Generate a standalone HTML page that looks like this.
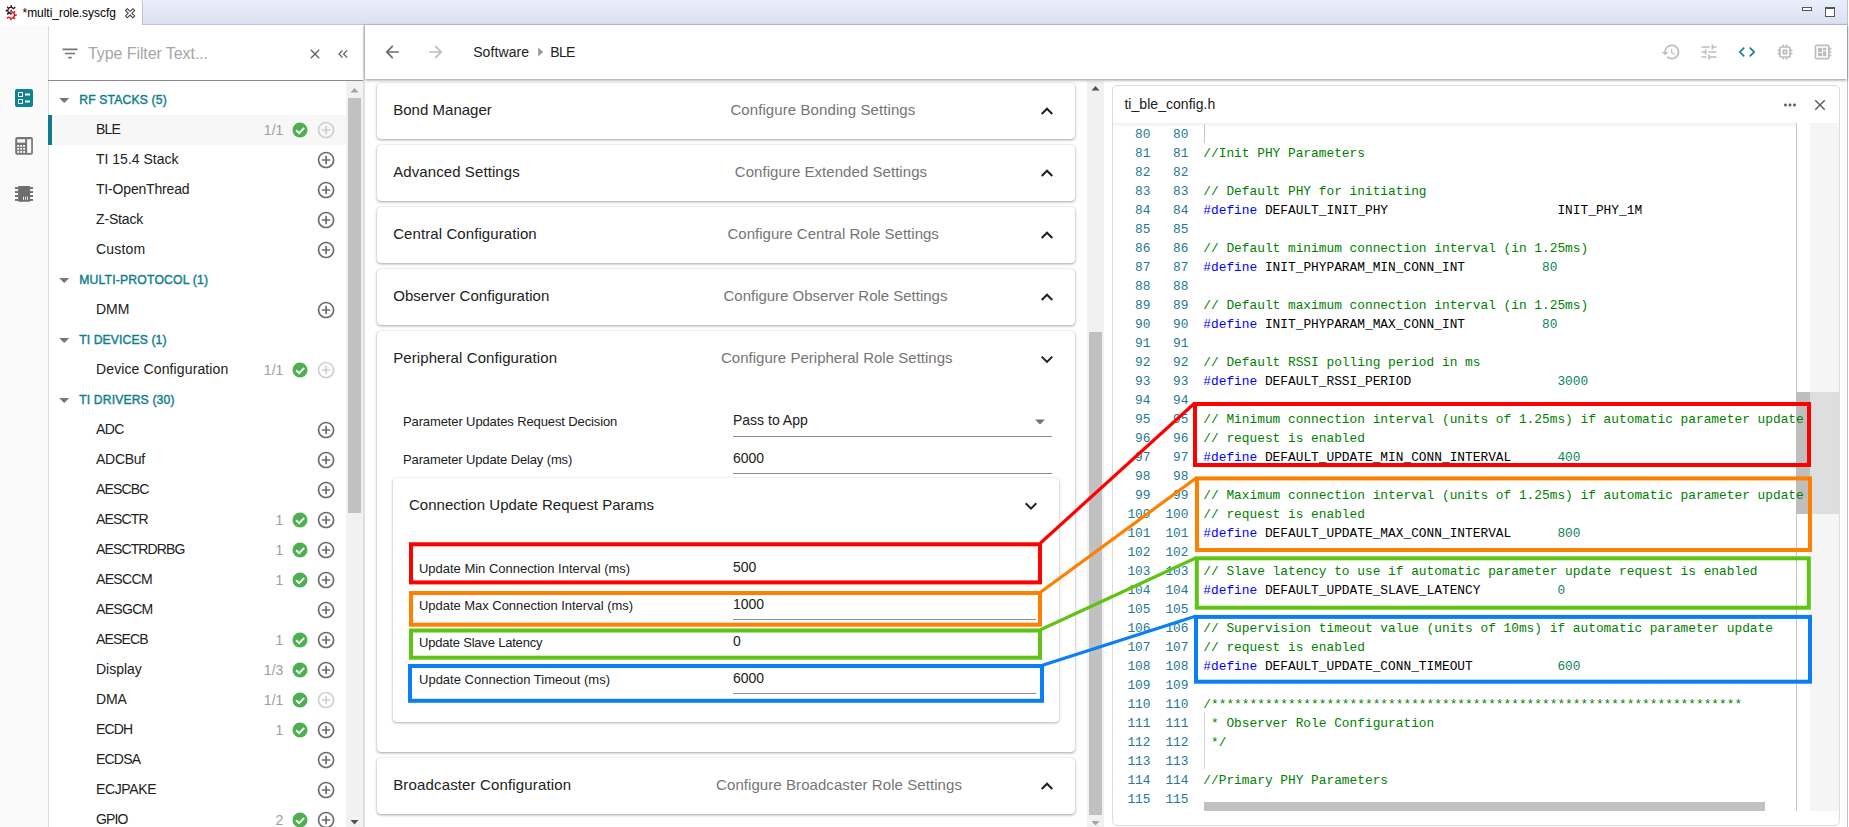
<!DOCTYPE html>
<html lang="en">
<head>
<meta charset="utf-8">
<title>multi_role.syscfg</title>
<style>
html,body{margin:0;padding:0;}
body{width:1849px;height:827px;overflow:hidden;background:#fff;position:relative;font-family:"Liberation Sans", Arial, sans-serif;}
.abs{position:absolute;}
.tx{position:absolute;white-space:pre;font-family:"Liberation Sans", Arial, sans-serif;}
/* tab bar */
#tabbar{left:0;top:0;width:1848px;height:24px;background:linear-gradient(#e9eefb,#dbe1f1);border-bottom:1px solid #bcc3dc;}
#tab{left:0;top:0;width:143px;height:25px;background:#fff;border-right:1px solid #bcc3dc;border-top-right-radius:3px;box-sizing:border-box;}
#winedge{left:1847px;top:0;width:1px;height:827px;background:#b7bfdb;}
/* left icon bar */
#iconbar{left:0;top:26px;width:49px;height:801px;background:#fafafa;border-right:1px solid #dcdcdc;box-sizing:border-box;}
/* left panel */
#filterline{left:48px;top:80px;width:315px;height:1px;background:#8a8a8a;}
#selrow{left:49px;top:115px;width:297px;height:30px;background:#f7f7f7;}
#selbar{left:48px;top:115px;width:4px;height:30px;background:#0e7d8c;}
#lscroll{left:346px;top:81px;width:17px;height:746px;background:#f1f1f1;}
#lthumb{left:348px;top:98px;width:13px;height:415px;background:#c1c1c1;}
#ldivider{left:363px;top:25px;width:2px;height:802px;background:#e0e0e0;}
/* toolbar */
#toolbar{left:365px;top:25px;width:1482px;height:54px;background:#fff;box-shadow:0 1px 3px rgba(0,0,0,.45);}
/* middle */
.card{position:absolute;left:377px;width:698px;background:#fff;border-radius:4px;box-shadow:0 1px 3px rgba(0,0,0,.35),0 0 1px rgba(0,0,0,.2);}
#inner{left:393px;top:478px;width:666px;height:244px;background:#fff;border-radius:4px;box-shadow:0 1px 3px rgba(0,0,0,.3),0 0 1px rgba(0,0,0,.2);}
.ul{position:absolute;height:1px;background:#8d8d8d;}
#mscroll{left:1087px;top:81px;width:17px;height:746px;background:#f1f1f1;}
#mthumb{left:1089px;top:332px;width:13px;height:483px;background:#c1c1c1;}
/* right */
#rcard{left:1112px;top:85px;width:728px;height:741px;background:#fff;border:1px solid #dcdcdc;border-radius:5px;box-sizing:border-box;}
#ruler{left:1796px;top:123px;width:1px;height:688px;background:#c8c8c8;}
#rgutter{left:1810px;top:123px;width:29px;height:688px;background:#f5f5f5;}
#rthumb1{left:1796px;top:392px;width:14px;height:122px;background:#bebebe;}
#rthumb2{left:1810px;top:392px;width:29px;height:122px;background:#dedede;}
#hthumb{left:1204px;top:802px;width:561px;height:9px;background:#c1c1c1;}
#cursor{left:1204px;top:124px;width:1px;height:19px;background:#c8c8c8;}
#guide{left:1204px;top:712px;width:1px;height:57px;background:#d3d3d3;}
.ln{position:absolute;left:1113px;width:700px;height:19px;line-height:19px;font-family:"Liberation Mono", "DejaVu Sans Mono", monospace;font-size:12.831px;white-space:pre;color:#000;}
.ln span{position:absolute;top:0;}
.n1{right:662.5px;color:#237893;}
.n2{right:624.5px;color:#237893;}
.src{left:90.300px;}
.src span{position:static;}
.c{color:#008000;}
.k{color:#0000ff;}
.n{color:#098658;}
.t{color:#000;}
svg{position:absolute;left:0;top:0;overflow:visible;}
</style>
</head>
<body>
<!-- eclipse tab bar -->
<div id="tabbar" class="abs"></div>
<div id="tab" class="abs"></div>
<div id="winedge" class="abs"></div>

<!-- left icon bar -->
<div id="iconbar" class="abs"></div>

<!-- left panel -->
<div id="selrow" class="abs"></div>
<div id="selbar" class="abs"></div>
<div id="filterline" class="abs"></div>
<div id="lscroll" class="abs"></div>
<div id="lthumb" class="abs"></div>
<div id="ldivider" class="abs"></div>

<!-- middle cards -->
<div class="card" style="top:83px;height:56px"></div>
<div class="card" style="top:145px;height:56px"></div>
<div class="card" style="top:207px;height:56px"></div>
<div class="card" style="top:269px;height:56px"></div>
<div class="card" style="top:331px;height:421px"></div>
<div class="card" style="top:758px;height:56px"></div>
<div id="inner" class="abs"></div>
<div class="ul" style="left:733px;top:436px;width:319px"></div>
<div class="ul" style="left:733px;top:473px;width:319px"></div>
<div class="ul" style="left:733px;top:582px;width:303px"></div>
<div class="ul" style="left:733px;top:619px;width:303px"></div>
<div class="ul" style="left:733px;top:656px;width:303px"></div>
<div class="ul" style="left:733px;top:693px;width:303px"></div>
<div id="mscroll" class="abs"></div>
<div id="mthumb" class="abs"></div>

<!-- right code card -->
<div id="rcard" class="abs"></div>
<div class="abs" style="left:1113px;top:123px;width:683px;height:4px;background:linear-gradient(#eeeeee,#ffffff)"></div>
<div id="rgutter" class="abs"></div>
<div id="ruler" class="abs"></div>
<div id="rthumb1" class="abs"></div>
<div id="rthumb2" class="abs"></div>
<div id="cursor" class="abs"></div>
<div id="guide" class="abs"></div>
<div class="ln" style="top:125px"><span class="n1">80</span><span class="n2">80</span><span class="src"></span></div>
<div class="ln" style="top:144px"><span class="n1">81</span><span class="n2">81</span><span class="src"><span class="c">//Init PHY Parameters</span></span></div>
<div class="ln" style="top:163px"><span class="n1">82</span><span class="n2">82</span><span class="src"></span></div>
<div class="ln" style="top:182px"><span class="n1">83</span><span class="n2">83</span><span class="src"><span class="c">// Default PHY for initiating</span></span></div>
<div class="ln" style="top:201px"><span class="n1">84</span><span class="n2">84</span><span class="src"><span class="k">#define</span><span class="t"> DEFAULT_INIT_PHY                      INIT_PHY_1M</span></span></div>
<div class="ln" style="top:220px"><span class="n1">85</span><span class="n2">85</span><span class="src"></span></div>
<div class="ln" style="top:239px"><span class="n1">86</span><span class="n2">86</span><span class="src"><span class="c">// Default minimum connection interval (in 1.25ms)</span></span></div>
<div class="ln" style="top:258px"><span class="n1">87</span><span class="n2">87</span><span class="src"><span class="k">#define</span><span class="t"> INIT_PHYPARAM_MIN_CONN_INT          </span><span class="n">80</span></span></div>
<div class="ln" style="top:277px"><span class="n1">88</span><span class="n2">88</span><span class="src"></span></div>
<div class="ln" style="top:296px"><span class="n1">89</span><span class="n2">89</span><span class="src"><span class="c">// Default maximum connection interval (in 1.25ms)</span></span></div>
<div class="ln" style="top:315px"><span class="n1">90</span><span class="n2">90</span><span class="src"><span class="k">#define</span><span class="t"> INIT_PHYPARAM_MAX_CONN_INT          </span><span class="n">80</span></span></div>
<div class="ln" style="top:334px"><span class="n1">91</span><span class="n2">91</span><span class="src"></span></div>
<div class="ln" style="top:353px"><span class="n1">92</span><span class="n2">92</span><span class="src"><span class="c">// Default RSSI polling period in ms</span></span></div>
<div class="ln" style="top:372px"><span class="n1">93</span><span class="n2">93</span><span class="src"><span class="k">#define</span><span class="t"> DEFAULT_RSSI_PERIOD                   </span><span class="n">3000</span></span></div>
<div class="ln" style="top:391px"><span class="n1">94</span><span class="n2">94</span><span class="src"></span></div>
<div class="ln" style="top:410px"><span class="n1">95</span><span class="n2">95</span><span class="src"><span class="c">// Minimum connection interval (units of 1.25ms) if automatic parameter update</span></span></div>
<div class="ln" style="top:429px"><span class="n1">96</span><span class="n2">96</span><span class="src"><span class="c">// request is enabled</span></span></div>
<div class="ln" style="top:448px"><span class="n1">97</span><span class="n2">97</span><span class="src"><span class="k">#define</span><span class="t"> DEFAULT_UPDATE_MIN_CONN_INTERVAL      </span><span class="n">400</span></span></div>
<div class="ln" style="top:467px"><span class="n1">98</span><span class="n2">98</span><span class="src"></span></div>
<div class="ln" style="top:486px"><span class="n1">99</span><span class="n2">99</span><span class="src"><span class="c">// Maximum connection interval (units of 1.25ms) if automatic parameter update</span></span></div>
<div class="ln" style="top:505px"><span class="n1">100</span><span class="n2">100</span><span class="src"><span class="c">// request is enabled</span></span></div>
<div class="ln" style="top:524px"><span class="n1">101</span><span class="n2">101</span><span class="src"><span class="k">#define</span><span class="t"> DEFAULT_UPDATE_MAX_CONN_INTERVAL      </span><span class="n">800</span></span></div>
<div class="ln" style="top:543px"><span class="n1">102</span><span class="n2">102</span><span class="src"></span></div>
<div class="ln" style="top:562px"><span class="n1">103</span><span class="n2">103</span><span class="src"><span class="c">// Slave latency to use if automatic parameter update request is enabled</span></span></div>
<div class="ln" style="top:581px"><span class="n1">104</span><span class="n2">104</span><span class="src"><span class="k">#define</span><span class="t"> DEFAULT_UPDATE_SLAVE_LATENCY          </span><span class="n">0</span></span></div>
<div class="ln" style="top:600px"><span class="n1">105</span><span class="n2">105</span><span class="src"></span></div>
<div class="ln" style="top:619px"><span class="n1">106</span><span class="n2">106</span><span class="src"><span class="c">// Supervision timeout value (units of 10ms) if automatic parameter update</span></span></div>
<div class="ln" style="top:638px"><span class="n1">107</span><span class="n2">107</span><span class="src"><span class="c">// request is enabled</span></span></div>
<div class="ln" style="top:657px"><span class="n1">108</span><span class="n2">108</span><span class="src"><span class="k">#define</span><span class="t"> DEFAULT_UPDATE_CONN_TIMEOUT           </span><span class="n">600</span></span></div>
<div class="ln" style="top:676px"><span class="n1">109</span><span class="n2">109</span><span class="src"></span></div>
<div class="ln" style="top:695px"><span class="n1">110</span><span class="n2">110</span><span class="src"><span class="c">/*********************************************************************</span></span></div>
<div class="ln" style="top:714px"><span class="n1">111</span><span class="n2">111</span><span class="src"><span class="c"> * Observer Role Configuration</span></span></div>
<div class="ln" style="top:733px"><span class="n1">112</span><span class="n2">112</span><span class="src"><span class="c"> */</span></span></div>
<div class="ln" style="top:752px"><span class="n1">113</span><span class="n2">113</span><span class="src"></span></div>
<div class="ln" style="top:771px"><span class="n1">114</span><span class="n2">114</span><span class="src"><span class="c">//Primary PHY Parameters</span></span></div>
<div class="ln" style="top:790px"><span class="n1">115</span><span class="n2">115</span><span class="src"></span></div>
<div id="hthumb" class="abs"></div>

<!-- toolbar (above cards, casts shadow) -->
<div id="toolbar" class="abs"></div>

<!-- all sans text -->
<span class="tx" style="left:22.5px;top:6px;font-size:12px;line-height:14px;color:#000;font-weight:normal;letter-spacing:-0.035px;">*multi_role.syscfg</span>
<span class="tx" style="left:88px;top:45px;font-size:16px;line-height:17px;color:#a6a6a6;font-weight:normal;letter-spacing:-0.081px;">Type Filter Text...</span>
<span class="tx" style="left:79.2px;top:93px;font-size:12.2px;line-height:14px;color:#0e7d8c;font-weight:normal;letter-spacing:0.148px;-webkit-text-stroke:0.4px #0e7d8c;">RF STACKS (5)</span>
<span class="tx" style="left:96px;top:121px;font-size:14px;line-height:16px;color:#212121;font-weight:normal;letter-spacing:-0.856px;">BLE</span>
<span class="tx" style="right:1565.7px;top:122px;font-size:14px;line-height:16px;color:#9e9e9e;font-weight:normal;">1/1</span>
<span class="tx" style="left:96px;top:151px;font-size:14px;line-height:16px;color:#212121;font-weight:normal;letter-spacing:0.001px;">TI 15.4 Stack</span>
<span class="tx" style="left:96px;top:181px;font-size:14px;line-height:16px;color:#212121;font-weight:normal;letter-spacing:-0.178px;">TI-OpenThread</span>
<span class="tx" style="left:96px;top:211px;font-size:14px;line-height:16px;color:#212121;font-weight:normal;letter-spacing:-0.148px;">Z-Stack</span>
<span class="tx" style="left:96px;top:241px;font-size:14px;line-height:16px;color:#212121;font-weight:normal;letter-spacing:0.178px;">Custom</span>
<span class="tx" style="left:79.2px;top:273px;font-size:12.2px;line-height:14px;color:#0e7d8c;font-weight:normal;letter-spacing:0.188px;-webkit-text-stroke:0.4px #0e7d8c;">MULTI-PROTOCOL (1)</span>
<span class="tx" style="left:96px;top:301px;font-size:14px;line-height:16px;color:#212121;font-weight:normal;letter-spacing:-0.013px;">DMM</span>
<span class="tx" style="left:79.2px;top:333px;font-size:12.2px;line-height:14px;color:#0e7d8c;font-weight:normal;letter-spacing:0.099px;-webkit-text-stroke:0.4px #0e7d8c;">TI DEVICES (1)</span>
<span class="tx" style="left:96px;top:361px;font-size:14px;line-height:16px;color:#212121;font-weight:normal;letter-spacing:0.122px;">Device Configuration</span>
<span class="tx" style="right:1565.7px;top:362px;font-size:14px;line-height:16px;color:#9e9e9e;font-weight:normal;">1/1</span>
<span class="tx" style="left:79.2px;top:393px;font-size:12.2px;line-height:14px;color:#0e7d8c;font-weight:normal;letter-spacing:0.129px;-webkit-text-stroke:0.4px #0e7d8c;">TI DRIVERS (30)</span>
<span class="tx" style="left:96px;top:421px;font-size:14px;line-height:16px;color:#212121;font-weight:normal;letter-spacing:-0.654px;">ADC</span>
<span class="tx" style="left:96px;top:451px;font-size:14px;line-height:16px;color:#212121;font-weight:normal;letter-spacing:-0.263px;">ADCBuf</span>
<span class="tx" style="left:96px;top:481px;font-size:14px;line-height:16px;color:#212121;font-weight:normal;letter-spacing:-0.830px;">AESCBC</span>
<span class="tx" style="left:96px;top:511px;font-size:14px;line-height:16px;color:#212121;font-weight:normal;letter-spacing:-0.816px;">AESCTR</span>
<span class="tx" style="right:1565.7px;top:512px;font-size:14px;line-height:16px;color:#9e9e9e;font-weight:normal;">1</span>
<span class="tx" style="left:96px;top:541px;font-size:14px;line-height:16px;color:#212121;font-weight:normal;letter-spacing:-0.873px;">AESCTRDRBG</span>
<span class="tx" style="right:1565.7px;top:542px;font-size:14px;line-height:16px;color:#9e9e9e;font-weight:normal;">1</span>
<span class="tx" style="left:96px;top:571px;font-size:14px;line-height:16px;color:#212121;font-weight:normal;letter-spacing:-0.668px;">AESCCM</span>
<span class="tx" style="right:1565.7px;top:572px;font-size:14px;line-height:16px;color:#9e9e9e;font-weight:normal;">1</span>
<span class="tx" style="left:96px;top:601px;font-size:14px;line-height:16px;color:#212121;font-weight:normal;letter-spacing:-0.681px;">AESGCM</span>
<span class="tx" style="left:96px;top:631px;font-size:14px;line-height:16px;color:#212121;font-weight:normal;letter-spacing:-0.819px;">AESECB</span>
<span class="tx" style="right:1565.7px;top:632px;font-size:14px;line-height:16px;color:#9e9e9e;font-weight:normal;">1</span>
<span class="tx" style="left:96px;top:661px;font-size:14px;line-height:16px;color:#212121;font-weight:normal;letter-spacing:-0.029px;">Display</span>
<span class="tx" style="right:1565.7px;top:662px;font-size:14px;line-height:16px;color:#9e9e9e;font-weight:normal;">1/3</span>
<span class="tx" style="left:96px;top:691px;font-size:14px;line-height:16px;color:#212121;font-weight:normal;letter-spacing:-0.108px;">DMA</span>
<span class="tx" style="right:1565.7px;top:692px;font-size:14px;line-height:16px;color:#9e9e9e;font-weight:normal;">1/1</span>
<span class="tx" style="left:96px;top:721px;font-size:14px;line-height:16px;color:#212121;font-weight:normal;letter-spacing:-0.843px;">ECDH</span>
<span class="tx" style="right:1565.7px;top:722px;font-size:14px;line-height:16px;color:#9e9e9e;font-weight:normal;">1</span>
<span class="tx" style="left:96px;top:751px;font-size:14px;line-height:16px;color:#212121;font-weight:normal;letter-spacing:-0.787px;">ECDSA</span>
<span class="tx" style="left:96px;top:781px;font-size:14px;line-height:16px;color:#212121;font-weight:normal;letter-spacing:-0.367px;">ECJPAKE</span>
<span class="tx" style="left:96px;top:811px;font-size:14px;line-height:16px;color:#212121;font-weight:normal;letter-spacing:-0.854px;">GPIO</span>
<span class="tx" style="right:1565.7px;top:812px;font-size:14px;line-height:16px;color:#9e9e9e;font-weight:normal;">2</span>
<span class="tx" style="left:473.2px;top:44px;font-size:14px;line-height:16px;color:#212121;font-weight:normal;letter-spacing:0.094px;">Software</span>
<span class="tx" style="left:550.3px;top:44px;font-size:14px;line-height:16px;color:#212121;font-weight:normal;letter-spacing:-0.690px;">BLE</span>
<span class="tx" style="left:393.2px;top:101px;font-size:15px;line-height:17px;color:#212121;font-weight:normal;letter-spacing:0.024px;">Bond Manager</span>
<span class="tx" style="left:730.4px;top:101px;font-size:15px;line-height:17px;color:#757575;font-weight:normal;letter-spacing:0.091px;">Configure Bonding Settings</span>
<span class="tx" style="left:393.2px;top:163px;font-size:15px;line-height:17px;color:#212121;font-weight:normal;letter-spacing:0.089px;">Advanced Settings</span>
<span class="tx" style="left:734.8px;top:163px;font-size:15px;line-height:17px;color:#757575;font-weight:normal;letter-spacing:0.049px;">Configure Extended Settings</span>
<span class="tx" style="left:393.2px;top:225px;font-size:15px;line-height:17px;color:#212121;font-weight:normal;letter-spacing:0.088px;">Central Configuration</span>
<span class="tx" style="left:727.5px;top:225px;font-size:15px;line-height:17px;color:#757575;font-weight:normal;letter-spacing:0.014px;">Configure Central Role Settings</span>
<span class="tx" style="left:393.2px;top:287px;font-size:15px;line-height:17px;color:#212121;font-weight:normal;letter-spacing:0.051px;">Observer Configuration</span>
<span class="tx" style="left:723.5px;top:287px;font-size:15px;line-height:17px;color:#757575;font-weight:normal;letter-spacing:-0.012px;">Configure Observer Role Settings</span>
<span class="tx" style="left:393.2px;top:349px;font-size:15px;line-height:17px;color:#212121;font-weight:normal;letter-spacing:0.089px;">Peripheral Configuration</span>
<span class="tx" style="left:721px;top:349px;font-size:15px;line-height:17px;color:#757575;font-weight:normal;letter-spacing:0.019px;">Configure Peripheral Role Settings</span>
<span class="tx" style="left:393.2px;top:776px;font-size:15px;line-height:17px;color:#212121;font-weight:normal;letter-spacing:0.153px;">Broadcaster Configuration</span>
<span class="tx" style="left:716.1px;top:776px;font-size:15px;line-height:17px;color:#757575;font-weight:normal;letter-spacing:0.069px;">Configure Broadcaster Role Settings</span>
<span class="tx" style="left:403px;top:414px;font-size:13px;line-height:15px;color:#212121;font-weight:normal;letter-spacing:-0.119px;">Parameter Updates Request Decision</span>
<span class="tx" style="left:733px;top:412px;font-size:14px;line-height:16px;color:#212121;font-weight:normal;">Pass to App</span>
<span class="tx" style="left:403px;top:452px;font-size:13px;line-height:15px;color:#212121;font-weight:normal;letter-spacing:-0.129px;">Parameter Update Delay (ms)</span>
<span class="tx" style="left:733px;top:450px;font-size:14px;line-height:16px;color:#212121;font-weight:normal;">6000</span>
<span class="tx" style="left:409px;top:496px;font-size:15px;line-height:17px;color:#212121;font-weight:normal;letter-spacing:0.021px;">Connection Update Request Params</span>
<span class="tx" style="left:419px;top:561px;font-size:13px;line-height:15px;color:#212121;font-weight:normal;letter-spacing:-0.017px;">Update Min Connection Interval (ms)</span>
<span class="tx" style="left:733px;top:559px;font-size:14px;line-height:16px;color:#212121;font-weight:normal;">500</span>
<span class="tx" style="left:419px;top:598px;font-size:13px;line-height:15px;color:#212121;font-weight:normal;letter-spacing:-0.037px;">Update Max Connection Interval (ms)</span>
<span class="tx" style="left:733px;top:596px;font-size:14px;line-height:16px;color:#212121;font-weight:normal;">1000</span>
<span class="tx" style="left:419px;top:635px;font-size:13px;line-height:15px;color:#212121;font-weight:normal;letter-spacing:-0.195px;">Update Slave Latency</span>
<span class="tx" style="left:733px;top:633px;font-size:14px;line-height:16px;color:#212121;font-weight:normal;">0</span>
<span class="tx" style="left:419px;top:672px;font-size:13px;line-height:15px;color:#212121;font-weight:normal;letter-spacing:0.008px;">Update Connection Timeout (ms)</span>
<span class="tx" style="left:733px;top:670px;font-size:14px;line-height:16px;color:#212121;font-weight:normal;">6000</span>
<span class="tx" style="left:1124.4px;top:96px;font-size:14px;line-height:16px;color:#212121;font-weight:normal;letter-spacing:0.047px;">ti_ble_config.h</span>

<!-- icons -->
<svg width="1849" height="827" viewBox="0 0 1849 827">
<defs>
<symbol id="i-plus" viewBox="0 0 24 24"><path d="M13 7h-2v4H7v2h4v4h2v-4h4v-2h-4V7zm-1-5C6.48 2 2 6.48 2 12s4.48 10 10 10 10-4.48 10-10S17.52 2 12 2zm0 18c-4.41 0-8-3.590-8-8s3.590-8 8-8 8 3.590 8 8-3.590 8-8 8z"/></symbol>
<symbol id="i-check" viewBox="0 0 24 24"><path d="M12 2C6.48 2 2 6.48 2 12s4.48 10 10 10 10-4.48 10-10S17.52 2 12 2zm-2 15l-5-5 1.410-1.410L10 14.170l7.590-7.590L19 8l-9 9z"/></symbol>
<symbol id="i-less" viewBox="0 0 24 24"><path d="M12 8l-6 6 1.410 1.410L12 10.830l4.590 4.580L18 14z"/></symbol>
<symbol id="i-more" viewBox="0 0 24 24"><path d="M16.590 8.590L12 13.170 7.410 8.590 6 10l6 6 6-6z"/></symbol>
<symbol id="i-back" viewBox="0 0 24 24"><path d="M20 11H7.830l5.590-5.590L12 4l-8 8 8 8 1.410-1.410L7.830 13H20v-2z"/></symbol>
<symbol id="i-fwd" viewBox="0 0 24 24"><path d="M12 4l-1.410 1.410L16.170 11H4v2h12.170l-5.580 5.590L12 20l8-8z"/></symbol>
<symbol id="i-close" viewBox="0 0 24 24"><path d="M19 6.410L17.590 5 12 10.590 6.410 5 5 6.410 10.590 12 5 17.590 6.410 19 12 13.410 17.590 19 19 17.590 13.410 12z"/></symbol>
<symbol id="i-filter" viewBox="0 0 24 24"><path d="M10 18h4v-2h-4v2zM3 6v2h18V6H3zm3 7h12v-2H6v2z"/></symbol>
<symbol id="i-history" viewBox="0 0 24 24"><path d="M13 3c-4.970 0-9 4.030-9 9H1l3.890 3.890.07.140L9 12H6c0-3.870 3.130-7 7-7s7 3.130 7 7-3.130 7-7 7c-1.930 0-3.680-.790-4.940-2.060l-1.420 1.420C8.270 19.990 10.510 21 13 21c4.970 0 9-4.030 9-9s-4.030-9-9-9zm-1 5v5l4.280 2.540.72-1.210-3.500-2.080V8H12z"/></symbol>
<symbol id="i-tune" viewBox="0 0 24 24"><path d="M3 17v2h6v-2H3zM3 5v2h10V5H3zm10 16v-2h8v-2h-8v-2h-2v6h2zM7 9v2H3v2h4v2h2V9H7zm14 4v-2H11v2h10zm-6-4h2V7h4V5h-4V3h-2v6z"/></symbol>
<symbol id="i-code" viewBox="0 0 24 24"><path d="M9.400 16.600L4.800 12l4.600-4.600L8 6l-6 6 6 6 1.400-1.400zm5.200 0l4.600-4.600-4.600-4.600L16 6l6 6-6 6-1.400-1.400z"/></symbol>
<symbol id="i-memory" viewBox="0 0 24 24"><path d="M15 9H9v6h6V9zm-2 4h-2v-2h2v2zm8-2V9h-2V7c0-1.100-.9-2-2-2h-2V3h-2v2h-2V3H9v2H7c-1.100 0-2 .9-2 2v2H3v2h2v2H3v2h2v2c0 1.100.9 2 2 2h2v2h2v-2h2v2h2v-2h2c1.100 0 2-.9 2-2v-2h2v-2h-2v-2h2zm-4 6H7V7h10v10z"/></symbol>
<symbol id="i-board" viewBox="0 0 24 24"><path d="M22 9V7h-2V5c0-1.100-.9-2-2-2H4c-1.100 0-2 .9-2 2v14c0 1.100.9 2 2 2h14c1.100 0 2-.9 2-2v-2h2v-2h-2v-2h2v-2h-2V9h2zm-4 10H4V5h14v14zM6 13h5v4H6zm6-6h4v3h-4zM6 7h5v5H6zm6 4h4v6h-4z"/></symbol>
<symbol id="i-dots" viewBox="0 0 24 24"><path d="M6 10c-1.100 0-2 .9-2 2s.9 2 2 2 2-.9 2-2-.9-2-2-2zm12 0c-1.100 0-2 .9-2 2s.9 2 2 2 2-.9 2-2-.9-2-2-2zm-6 0c-1.100 0-2 .9-2 2s.9 2 2 2 2-.9 2-2-.9-2-2-2z"/></symbol>
<symbol id="i-ballot" viewBox="0 0 24 24"><path d="M13 9.500h5v-2h-5v2zm0 7h5v-2h-5v2zm6 4.500H5c-1.100 0-2-.9-2-2V5c0-1.100.9-2 2-2h14c1.100 0 2 .9 2 2v14c0 1.100-.9 2-2 2zM6 11h5V6H6v5zm1-4h3v3H7V7zM6 18h5v-5H6v5zm1-4h3v3H7v-3z"/></symbol>
</defs>

<!-- tab icon: gear with S -->
<g fill="none">
  <path d="M8.53 13.40A3.2 3.2 0 1 1 8.53 16.60" stroke="#dd0a0a" stroke-width="1.300"/>
  <path d="M10.52 10.57A4.5 4.5 0 1 1 6.87 15.78" stroke="#dd0a0a" stroke-width="1.700" stroke-dasharray="1.500 2.030"/>
  <path d="M13.90 9.25A3.2 3.2 0 1 0 12.35 13.50" stroke="#1a1a1a" stroke-width="1.300"/>
  <path d="M14.90 8.35A4.5 4.5 0 1 0 10.22 15.03" stroke="#1a1a1a" stroke-width="1.700" stroke-dasharray="1.500 2.030"/>
</g>
<!-- tab close -->
<path transform="translate(125.500 8.600) scale(0.920)" d="M0 2L2 0L5 3L8 0L10 2L7 5L10 8L8 10L5 7L2 10L0 8L3 5z" fill="#fff" stroke="#3c3c3c" stroke-width="1.100" stroke-linejoin="miter"/>
<!-- min / max -->
<rect x="1802.500" y="7.500" width="9" height="3" fill="#fff" stroke="#555" stroke-width="1"/>
<rect x="1825.500" y="8" width="9" height="8.500" fill="#fff" stroke="#555" stroke-width="1"/>
<rect x="1825" y="7" width="10" height="2" fill="#555"/>

<!-- icon bar -->
<use href="#i-ballot" x="12" y="86" width="24" height="24" fill="#0e8391"/>
<rect x="15.200" y="137" width="17.700" height="17.700" rx="2" fill="#757575"/>
<g fill="#fafafa">
  <rect x="17.200" y="139.200" width="8" height="3.400"/>
  <rect x="27.100" y="139.200" width="4.100" height="13.700"/>
  <rect x="17.200" y="145" width="1.900" height="1.900"/><rect x="20.200" y="145" width="1.900" height="1.900"/><rect x="23.200" y="145" width="1.900" height="1.900"/>
  <rect x="17.200" y="147.900" width="1.900" height="1.900"/><rect x="20.200" y="147.900" width="1.900" height="1.900"/><rect x="23.200" y="147.900" width="1.900" height="1.900"/>
  <rect x="17.200" y="150.900" width="1.900" height="2"/><rect x="20.200" y="150.900" width="1.900" height="2"/><rect x="23.200" y="150.900" width="1.900" height="2"/>
</g>
<g fill="#6e6e6e">
  <rect x="18.100" y="186.100" width="12" height="15.700" rx="0.800"/>
  <rect x="15" y="187.100" width="3.200" height="1.900"/><rect x="15" y="191.100" width="3.200" height="1.900"/><rect x="15" y="195.100" width="3.200" height="1.900"/><rect x="15" y="199" width="3.200" height="1.900"/>
  <rect x="30" y="187.100" width="3" height="1.900"/><rect x="30" y="191.100" width="3" height="1.900"/><rect x="30" y="195.100" width="3" height="1.900"/><rect x="30" y="199" width="3" height="1.900"/>
</g>
<g fill="#fafafa"><rect x="23" y="196.700" width="0.900" height="3.100"/><rect x="25" y="196.700" width="0.900" height="3.100"/><rect x="27" y="196.700" width="0.900" height="3.100"/></g>

<!-- filter bar icons -->
<use href="#i-filter" x="60" y="43.500" width="20" height="20" fill="#757575"/>
<use href="#i-close" x="307" y="46" width="16" height="16" fill="#616161"/>
<path d="M342.500 50.400L339 54l3.500 3.600M347.100 50.400L343.600 54l3.500 3.600" fill="none" stroke="#616161" stroke-width="1.300"/>

<!-- left scrollbar arrows -->
<path d="M350.500 92.500l4-4.500 4 4.500z" fill="#a3a3a3"/>
<path d="M350.500 820l4 4.500 4-4.500z" fill="#505050"/>

<!-- tree icons -->
<path d="M59.2,98 h10 l-5,5z" fill="#757575"/>
<circle cx="300" cy="130" r="7.500" fill="#4caf50"/><path d="M296.100 130.2l3.100 3 5-5.300" fill="none" stroke="#fff" stroke-width="1.900"/>
<use href="#i-plus" x="316.1" y="120" width="20" height="20" fill="#cfcfcf"/>
<use href="#i-plus" x="316.1" y="150" width="20" height="20" fill="#6b6b6b"/>
<use href="#i-plus" x="316.1" y="180" width="20" height="20" fill="#6b6b6b"/>
<use href="#i-plus" x="316.1" y="210" width="20" height="20" fill="#6b6b6b"/>
<use href="#i-plus" x="316.1" y="240" width="20" height="20" fill="#6b6b6b"/>
<path d="M59.2,278 h10 l-5,5z" fill="#757575"/>
<use href="#i-plus" x="316.1" y="300" width="20" height="20" fill="#6b6b6b"/>
<path d="M59.2,338 h10 l-5,5z" fill="#757575"/>
<circle cx="300" cy="370" r="7.500" fill="#4caf50"/><path d="M296.100 370.2l3.100 3 5-5.300" fill="none" stroke="#fff" stroke-width="1.900"/>
<use href="#i-plus" x="316.1" y="360" width="20" height="20" fill="#cfcfcf"/>
<path d="M59.2,398 h10 l-5,5z" fill="#757575"/>
<use href="#i-plus" x="316.1" y="420" width="20" height="20" fill="#6b6b6b"/>
<use href="#i-plus" x="316.1" y="450" width="20" height="20" fill="#6b6b6b"/>
<use href="#i-plus" x="316.1" y="480" width="20" height="20" fill="#6b6b6b"/>
<circle cx="300" cy="520" r="7.500" fill="#4caf50"/><path d="M296.100 520.2l3.100 3 5-5.300" fill="none" stroke="#fff" stroke-width="1.900"/>
<use href="#i-plus" x="316.1" y="510" width="20" height="20" fill="#6b6b6b"/>
<circle cx="300" cy="550" r="7.500" fill="#4caf50"/><path d="M296.100 550.2l3.100 3 5-5.300" fill="none" stroke="#fff" stroke-width="1.900"/>
<use href="#i-plus" x="316.1" y="540" width="20" height="20" fill="#6b6b6b"/>
<circle cx="300" cy="580" r="7.500" fill="#4caf50"/><path d="M296.100 580.2l3.100 3 5-5.300" fill="none" stroke="#fff" stroke-width="1.900"/>
<use href="#i-plus" x="316.1" y="570" width="20" height="20" fill="#6b6b6b"/>
<use href="#i-plus" x="316.1" y="600" width="20" height="20" fill="#6b6b6b"/>
<circle cx="300" cy="640" r="7.500" fill="#4caf50"/><path d="M296.100 640.2l3.100 3 5-5.300" fill="none" stroke="#fff" stroke-width="1.900"/>
<use href="#i-plus" x="316.1" y="630" width="20" height="20" fill="#6b6b6b"/>
<circle cx="300" cy="670" r="7.500" fill="#4caf50"/><path d="M296.100 670.2l3.100 3 5-5.300" fill="none" stroke="#fff" stroke-width="1.900"/>
<use href="#i-plus" x="316.1" y="660" width="20" height="20" fill="#6b6b6b"/>
<circle cx="300" cy="700" r="7.500" fill="#4caf50"/><path d="M296.100 700.2l3.100 3 5-5.300" fill="none" stroke="#fff" stroke-width="1.900"/>
<use href="#i-plus" x="316.1" y="690" width="20" height="20" fill="#cfcfcf"/>
<circle cx="300" cy="730" r="7.500" fill="#4caf50"/><path d="M296.100 730.2l3.100 3 5-5.300" fill="none" stroke="#fff" stroke-width="1.900"/>
<use href="#i-plus" x="316.1" y="720" width="20" height="20" fill="#6b6b6b"/>
<use href="#i-plus" x="316.1" y="750" width="20" height="20" fill="#6b6b6b"/>
<use href="#i-plus" x="316.1" y="780" width="20" height="20" fill="#6b6b6b"/>
<circle cx="300" cy="820" r="7.500" fill="#4caf50"/><path d="M296.100 820.2l3.100 3 5-5.300" fill="none" stroke="#fff" stroke-width="1.900"/>
<use href="#i-plus" x="316.1" y="810" width="20" height="20" fill="#6b6b6b"/>

<!-- toolbar icons -->
<use href="#i-back" x="382.200" y="42" width="20" height="20" fill="#6c6c6c"/>
<use href="#i-fwd" x="425.700" y="42" width="20" height="20" fill="#bdbdbd"/>
<path d="M538.200 47.500l5 4.500-5 4.500z" fill="#9a9a9a"/>
<use href="#i-history" x="1661" y="42" width="20" height="20" fill="#bdbdbd"/>
<use href="#i-tune" x="1699" y="42" width="20" height="20" fill="#bdbdbd"/>
<use href="#i-code" x="1737" y="42" width="20" height="20" fill="#0e8391"/>
<use href="#i-memory" x="1775" y="42" width="20" height="20" fill="#bdbdbd"/>
<use href="#i-board" x="1813" y="42" width="20" height="20" fill="#bdbdbd"/>

<!-- card chevrons -->
<use href="#i-less" x="1035" y="99.300" width="24" height="24" fill="#212121"/>
<use href="#i-less" x="1035" y="161.300" width="24" height="24" fill="#212121"/>
<use href="#i-less" x="1035" y="223.300" width="24" height="24" fill="#212121"/>
<use href="#i-less" x="1035" y="285.300" width="24" height="24" fill="#212121"/>
<use href="#i-more" x="1035" y="347.300" width="24" height="24" fill="#212121"/>
<use href="#i-less" x="1035" y="774.300" width="24" height="24" fill="#212121"/>
<use href="#i-more" x="1019" y="494" width="24" height="24" fill="#212121"/>
<path d="M1035 419.500h10l-5 5z" fill="#757575"/>

<!-- middle scrollbar arrows -->
<path d="M1091.500 90.500l4-4.500 4 4.500z" fill="#505050"/>
<path d="M1091.500 821l4 4.500 4-4.500z" fill="#a3a3a3"/>

<!-- right card icons -->
<use href="#i-dots" x="1781" y="96" width="18" height="18" fill="#616161"/>
<use href="#i-close" x="1811" y="96" width="18" height="18" fill="#616161"/>

<!-- annotation overlays -->
<g fill="none" stroke-width="4" stroke-linejoin="miter">
  <g stroke="#ff0000">
    <rect x="411" y="544.300" width="629" height="38.100"/>
    <rect x="1195" y="404" width="614" height="61"/>
    <path d="M1040.500 543L1194.500 403.300" stroke-width="3.200"/>
  </g>
  <g stroke="#ff8000">
    <rect x="411" y="593" width="629" height="31.700"/>
    <rect x="1197" y="478.400" width="613" height="71.600"/>
    <path d="M1040.500 592.300L1196.500 477.800" stroke-width="3.200"/>
  </g>
  <g stroke="#5fc215">
    <rect x="411" y="630.500" width="629" height="27.200"/>
    <rect x="1196.800" y="558.300" width="612" height="49.400"/>
    <path d="M1040.500 629.800L1196.300 557.700" stroke-width="3.200"/>
  </g>
  <g stroke="#0a7ef5">
    <rect x="410" y="666" width="632" height="34.800"/>
    <rect x="1196" y="616.900" width="614" height="64.800"/>
    <path d="M1042.500 665.300L1195.500 616.300" stroke-width="3.200"/>
  </g>
</g>
</svg>
</body>
</html>
